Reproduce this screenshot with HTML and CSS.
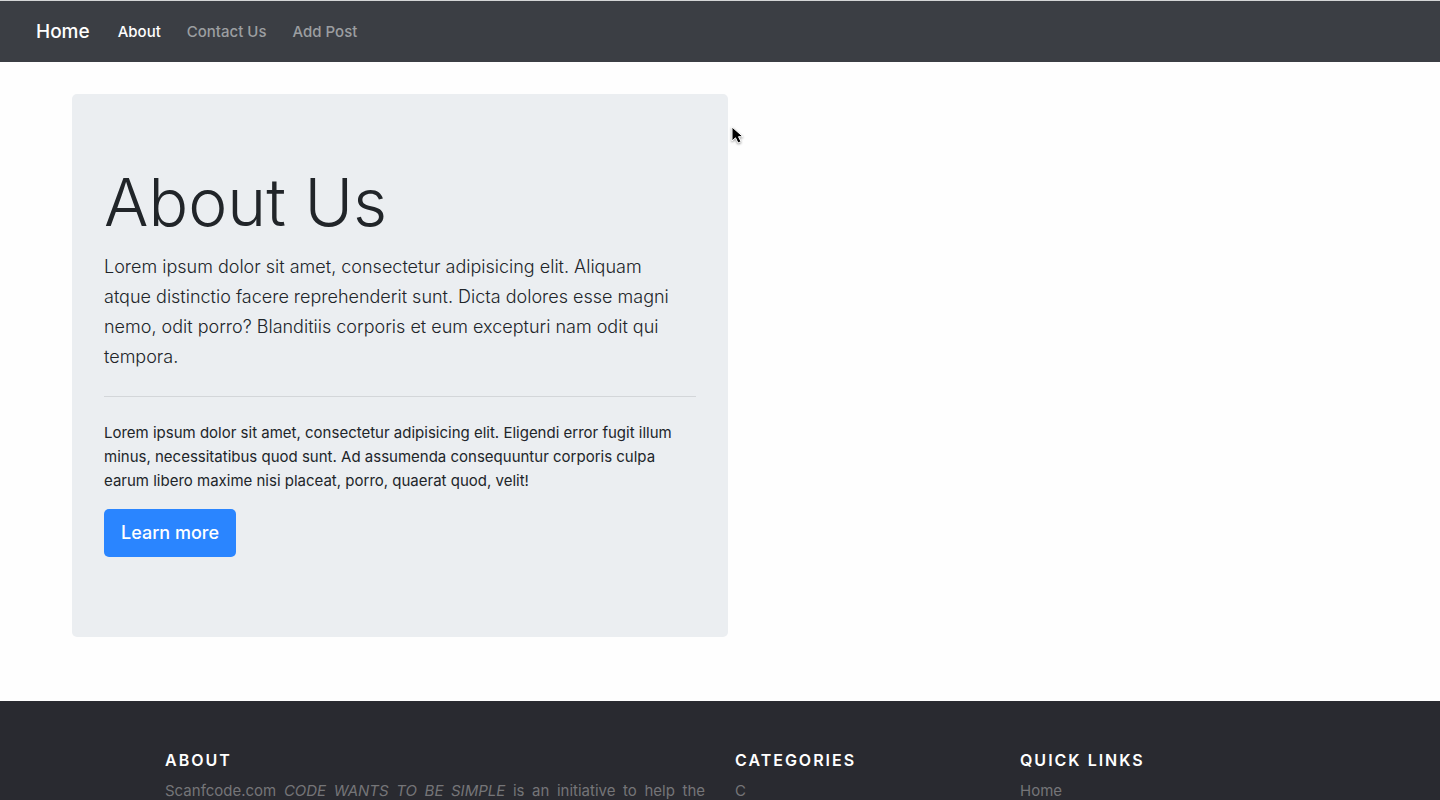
FILE: index.html
```html
<!DOCTYPE html>
<html lang="en">
<head>
<meta charset="utf-8">
<meta name="viewport" content="width=device-width, initial-scale=1">
<title>About Us</title>
<link rel="stylesheet" href="styles.css">
</head>
<body>
<nav class="navbar">
  <a class="brand" href="#">Home</a>
  <a class="nav-link active" href="#">About</a>
  <a class="nav-link" href="#">Contact Us</a>
  <a class="nav-link" href="#">Add Post</a>
</nav>
<main class="main">
  <section class="jumbotron">
    <h1 class="title">About Us</h1>
    <p class="lead">Lorem ipsum dolor sit amet, consectetur adipisicing elit. Aliquam<br>atque distinctio facere reprehenderit sunt. Dicta dolores esse magni<br>nemo, odit porro? Blanditiis corporis et eum excepturi nam odit qui<br>tempora.</p>
    <hr class="rule">
    <p class="text">Lorem ipsum dolor sit amet, consectetur adipisicing elit. Eligendi error fugit illum<br>minus, necessitatibus quod sunt. Ad assumenda consequuntur corporis culpa<br>earum libero maxime nisi placeat, porro, quaerat quod, velit!</p>
    <a class="button" href="#">Learn more</a>
  </section>
</main>
<footer class="footer">
  <div class="footer-grid">
    <section>
      <h2 class="footer-title">About</h2>
      <p class="footer-text">Scanfcode.com <i>CODE WANTS TO BE SIMPLE</i> is an initiative to help the</p>
    </section>
    <section>
      <h2 class="footer-title">Categories</h2>
      <a class="footer-link" href="#">C</a>
    </section>
    <section>
      <h2 class="footer-title">Quick Links</h2>
      <a class="footer-link" href="#">Home</a>
    </section>
  </div>
</footer>
<svg class="cursor" width="14" height="20" viewBox="0 0 14 20" aria-hidden="true">
  <path d="M1 1v14l3.500-3.200 2.500 5.200 3-1.300-2.500-5h4.500z" fill="#000" stroke="#fff" stroke-width="1"/>
</svg>
</body>
</html>
```
FILE: styles.css
```css
* { box-sizing: border-box; }
body {
  margin: 0;
  background: #fefefe;
  color: #212529;
  font: 16px/24px Inter, "Liberation Sans", sans-serif;
}
h1, h2, p { margin: 0; }
a { text-decoration: none; }
.navbar {
  display: flex;
  align-items: center;
  padding: 19px 36px 18px;
  border-top: 1px solid #d3d5d6;
  background: #3b3e44;
}
.brand {
  margin-right: 15px;
  color: #fff;
  font-size: 19px;
  font-weight: 500;
}
.nav-link {
  padding: 0 13px;
  color: #9c9ea1;
  font-size: 15px;
  font-weight: 500;
}
.active { color: #fff; }
.main { padding: 32px 72px 64px; }
.jumbotron {
  width: calc(50vw - 64px);
  padding: 64px 32px 80px;
  border-radius: 5px;
  background: #ebeef1;
}
.title {
  padding-top: 2px;
  margin-bottom: 8px;
  font-size: 66px;
  line-height: 84px;
  font-weight: 300;
}
.lead {
  font-size: 18px;
  line-height: 30px;
  font-weight: 300;
}
.rule {
  margin: 24px 0;
  border: 0;
  border-top: 1px solid #d3d6d9;
}
.text {
  margin-bottom: 16px;
  font-size: 15px;
}
.button {
  display: block;
  width: fit-content;
  padding: 9px 17px;
  border-radius: 5px;
  background: #2a85ff;
  color: #fff;
  font-size: 18px;
  font-weight: 500;
  line-height: 30px;
}
.footer {
  height: 99px;
  padding: 47px 15px 0;
  overflow: hidden;
  background: #292a30;
  color: #757578;
  font-size: 15px;
}
.footer-grid {
  display: grid;
  grid-template-columns: minmax(0, 540fr) minmax(0, 255fr) minmax(0, 255fr);
  column-gap: 30px;
  max-width: 1110px;
  margin: 0 auto;
}
.footer-title {
  margin-bottom: 7px;
  color: #fff;
  font-size: 16px;
  font-weight: 600;
  letter-spacing: 2px;
  text-transform: uppercase;
}
.footer-text {
  text-align: justify;
  text-align-last: justify;
}
.footer-link { color: inherit; }
.cursor {
  position: absolute;
  left: 731px;
  top: 126px;
  filter: drop-shadow(0 1px 1px rgba(0, 0, 0, 0.4));
}
```
